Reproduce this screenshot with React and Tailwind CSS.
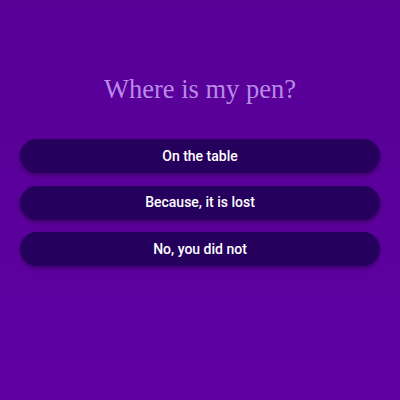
export default function App() {
  const answers = ['On the table', 'Because, it is lost', 'No, you did not'];

  return (
    <div className="w-[400px] h-[400px] bg-gradient-to-b from-[#560096] to-[#6000a2] flex flex-col items-center">
      <h1 className="mt-[72px] text-[26.5px] leading-[34px] text-[#b98ae6] font-['Liberation_Serif',serif]">
        Where is my pen?
      </h1>
      <div className="mt-[33px] w-full px-5 flex flex-col gap-[12.5px]">
        {answers.map((a) => (
          <button
            key={a}
            className="h-[34px] w-full rounded-full bg-[#25005d] text-white text-[14px] font-medium font-['Roboto',sans-serif] shadow-[0_2px_4px_rgba(0,0,0,0.35)]"
          >
            {a}
          </button>
        ))}
      </div>
    </div>
  );
}
